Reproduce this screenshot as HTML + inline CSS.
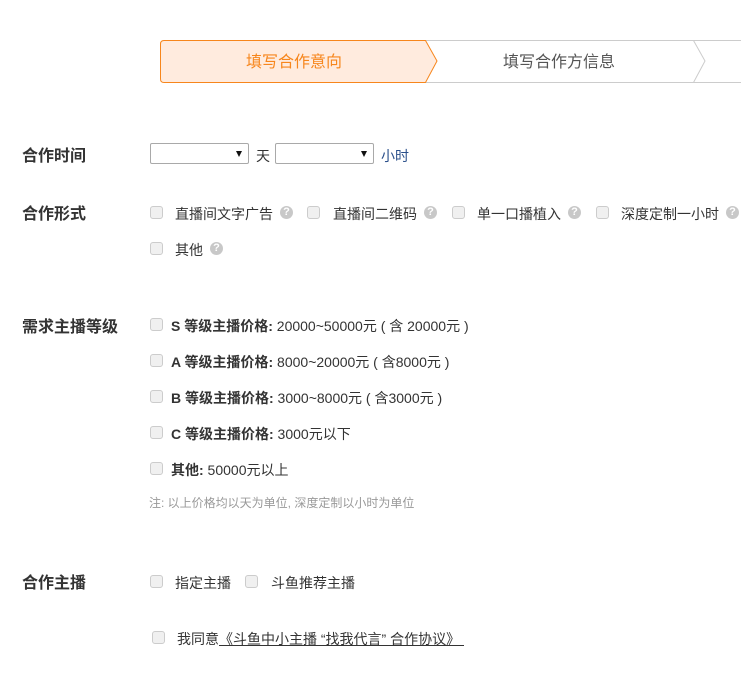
<!DOCTYPE html>
<html><head><meta charset="utf-8"><style>
*{margin:0;padding:0;box-sizing:border-box}
body{width:741px;height:677px;background:#fff;position:relative;overflow:hidden;font-family:"Liberation Sans","Noto Sans CJK SC",sans-serif;color:#333}
.a{position:absolute;white-space:nowrap;line-height:1}
.lbl{font-size:16px;font-weight:bold;color:#333}
.t{font-size:14px;color:#333}
.cb{position:absolute;width:13px;height:13px;border:1px solid #ccc;border-radius:3px;background:#f0f0f0}
.q{position:absolute;width:13px;height:13px;border-radius:50%;background:#c8c8c8;color:#fff;font-size:11px;font-weight:bold;line-height:13px;text-align:center}
.sel{position:absolute;height:21px;border:1px solid #a9a9a9;border-radius:2px;background:#fff}
.sel:after{content:"";position:absolute;right:6px;top:7px;border-left:3px solid transparent;border-right:3px solid transparent;border-top:6px solid #111}
b{font-weight:bold}
</style></head><body>
<svg class="a" style="left:0;top:0" width="741" height="100">
<path d="M425.5,40.5 L693.5,40.5 L705,61 L693.5,82.5 L425.5,82.5" fill="#fff" stroke="#ccc"/>
<path d="M693.5,40.5 L741,40.5 M693.5,82.5 L741,82.5" stroke="#ccc"/>
<path d="M164,40.5 L425.5,40.5 L437,61 L425.5,82.5 L164,82.5 Q160.5,82.5 160.5,79 L160.5,44 Q160.5,40.5 164,40.5Z" fill="#ffebde" stroke="#f7861c"/>
</svg>
<div class="a" style="left:246px;top:55px;font-size:16px;color:#f7861c">填写合作意向</div>
<div class="a" style="left:503px;top:55px;font-size:16px;color:#555">填写合作方信息</div>

<div class="a lbl" style="left:22px;top:149px">合作时间</div>
<div class="sel" style="left:150px;top:143px;width:99px"></div>
<div class="a t" style="left:256px;top:149px">天</div>
<div class="sel" style="left:275px;top:143px;width:99px"></div>
<div class="a t" style="left:381px;top:149px;color:#2a4f8a">小时</div>

<div class="a lbl" style="left:22px;top:207px">合作形式</div>
<div class="cb" style="left:150px;top:206px"></div><div class="a t" style="left:175px;top:207px">直播间文字广告</div><div class="q" style="left:280px;top:206px">?</div>
<div class="cb" style="left:307px;top:206px"></div><div class="a t" style="left:333px;top:207px">直播间二维码</div><div class="q" style="left:424px;top:206px">?</div>
<div class="cb" style="left:452px;top:206px"></div><div class="a t" style="left:477px;top:207px">单一口播植入</div><div class="q" style="left:568px;top:206px">?</div>
<div class="cb" style="left:596px;top:206px"></div><div class="a t" style="left:621px;top:207px">深度定制一小时</div><div class="q" style="left:726px;top:206px">?</div>
<div class="cb" style="left:150px;top:242px"></div><div class="a t" style="left:175px;top:243px">其他</div><div class="q" style="left:210px;top:242px">?</div>

<div class="a lbl" style="left:22px;top:320px">需求主播等级</div>
<div class="cb" style="left:150px;top:318px"></div><div class="a t" style="left:171px;top:319px"><b>S 等级主播价格:</b> 20000~50000元 ( 含 20000元 )</div>
<div class="cb" style="left:150px;top:354px"></div><div class="a t" style="left:171px;top:355px"><b>A 等级主播价格:</b> 8000~20000元 ( 含8000元 )</div>
<div class="cb" style="left:150px;top:390px"></div><div class="a t" style="left:171px;top:391px"><b>B 等级主播价格:</b> 3000~8000元 ( 含3000元 )</div>
<div class="cb" style="left:150px;top:426px"></div><div class="a t" style="left:171px;top:427px"><b>C 等级主播价格:</b> 3000元以下</div>
<div class="cb" style="left:150px;top:462px"></div><div class="a t" style="left:171px;top:463px"><b>其他:</b> 50000元以上</div>
<div class="a" style="left:149px;top:497px;font-size:12px;color:#999">注: 以上价格均以天为单位, 深度定制以小时为单位</div>

<div class="a lbl" style="left:22px;top:576px">合作主播</div>
<div class="cb" style="left:150px;top:575px"></div><div class="a t" style="left:175px;top:576px">指定主播</div>
<div class="cb" style="left:245px;top:575px"></div><div class="a t" style="left:271px;top:576px">斗鱼推荐主播</div>

<div class="cb" style="left:152px;top:631px"></div>
<div class="a t" style="left:177px;top:632px;padding-bottom:2px">我同意<span style="text-decoration:underline">《斗鱼中小主播 “找我代言” 合作协议》&nbsp;</span></div>
</body></html>
